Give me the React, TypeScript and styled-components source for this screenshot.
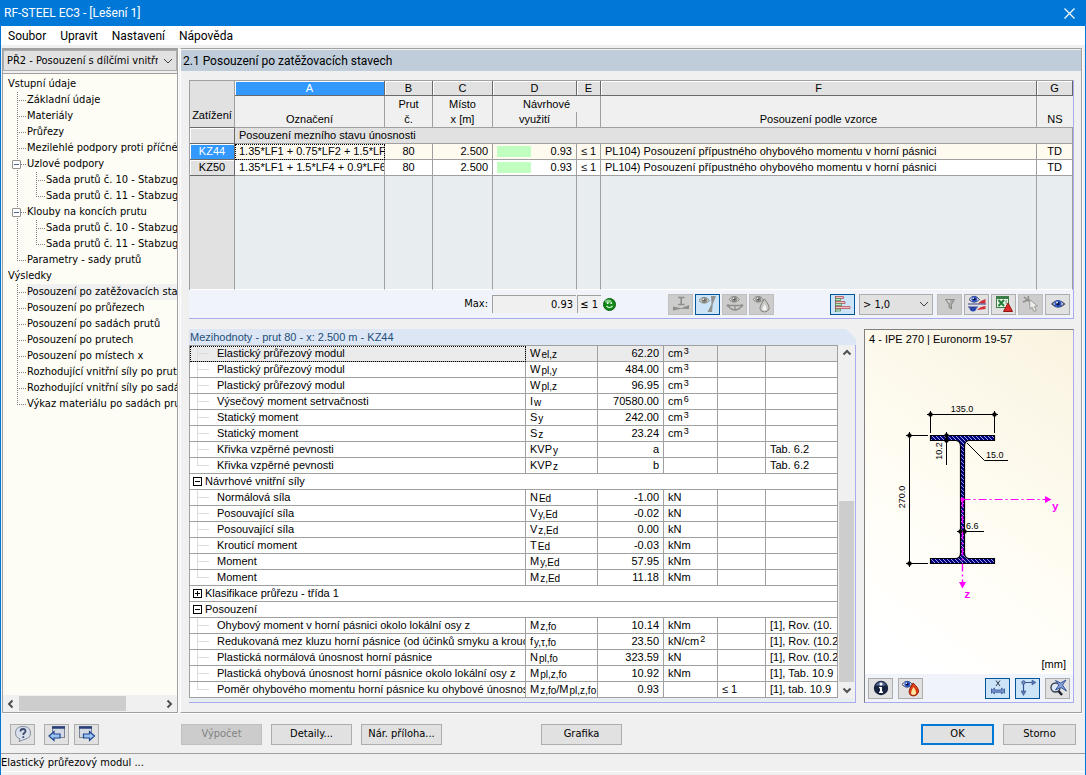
import React from 'react';
import styled, { createGlobalStyle, css } from 'styled-components';

const ui = '"DejaVu Sans Condensed", "DejaVu Sans", sans-serif';
const chrome = 'Roboto, "Open Sans", sans-serif';
const gridFont = '"Liberation Sans", Arial, sans-serif';
const line = '#a0a0a0';

const Global = createGlobalStyle`
  *, *::before, *::after { box-sizing: border-box; }
  html, body { margin: 0; padding: 0; background: #f0f0f0; }
  body { font: 11px/16px ${ui}; color: #000; }
  button, input, select { font: inherit; color: inherit; margin: 0; padding: 0; border-radius: 0; }
  ul, h1, h2, h3, p { margin: 0; padding: 0; font: inherit; list-style: none; }
  svg { display: block; flex: none; }
`;

const Frame = styled.div`
  display: flex;
  flex-direction: column;
  min-height: 100vh;
  border: 1px solid #0078d7;
  border-top: 0;
  background: #f0f0f0;
`;

const TitleBar = styled.header`
  display: flex;
  align-items: center;
  justify-content: space-between;
  height: 26px;
  padding: 0 10px 0 3px;
  background: #0078d7;
  color: #fff;
  font: 12px/16px ${chrome};
`;

const CloseButton = styled.button`
  display: flex;
  border: 0;
  background: none;
  color: #fff;
`;

const MenuBar = styled.nav`
  display: flex;
  gap: 14px;
  height: 19px;
  margin-bottom: 3px;
  padding: 0 7px;
  background: #fff;
  font: 12px/20px ${chrome};
  a { color: #000; text-decoration: none; }
`;

const Work = styled.div`
  display: flex;
  flex: 1;
  gap: 2px;
  padding: 0 3px 0 1px;
`;

const SidePane = styled.aside`
  display: flex;
  flex-direction: column;
  flex: none;
  width: 176px;
  border: 1px solid ${line};
  border-top-width: 2px;
  background: #fdfdf5;
  box-shadow: 1px 1px #fff;
`;

const SelectBox = styled.div<{ $width?: string }>`
  display: grid;
  align-items: center;
  width: ${p => p.$width || '100%'};
  > * { grid-area: 1 / 1; }
  svg { justify-self: end; margin-right: 4px; pointer-events: none; }
`;

const Select = styled.select`
  appearance: none;
  width: 100%;
  height: 21px;
  padding: 1px 18px 0 3px;
  border: 1px solid #adadad;
  background: #e1e1e1;
  outline: 0;
`;

const CaseRow = styled.div`
  padding-bottom: 2px;
  border-bottom: 1px solid ${line};
  background: #f0f0f0;
`;

const Tree = styled.ul`
  flex: 1;
  overflow: hidden;
  padding-top: 2px;
`;

const TreeRow = styled.li`
  display: flex;
  height: 16px;
  padding-left: 5px;
  white-space: nowrap;
`;

type GuideKind = 'tee' | 'end' | 'pass' | 'blank';
const dotV = 'repeating-linear-gradient(#808080 0 1px, transparent 1px 2px)';
const dotH = 'repeating-linear-gradient(90deg, #808080 0 1px, transparent 1px 2px)';

const Guide = styled.span<{ $kind: GuideKind }>`
  display: flex;
  flex: none;
  align-items: center;
  width: 19px;
  padding-left: 4px;
  background-repeat: no-repeat;
  ${p => p.$kind === 'tee' && css`
    background-image: ${dotV}, ${dotH};
    background-size: 1px 16px, 9px 1px;
    background-position: 9px 0, 9px 8px;
  `}
  ${p => p.$kind === 'end' && css`
    background-image: ${dotV}, ${dotH};
    background-size: 1px 8px, 9px 1px;
    background-position: 9px 0, 9px 8px;
  `}
  ${p => p.$kind === 'pass' && css`
    background-image: ${dotV};
    background-size: 1px 16px;
    background-position: 9px 0;
  `}
`;

const TreeToggle = styled.button`
  display: flex;
  align-items: center;
  justify-content: center;
  width: 9px;
  height: 9px;
  border: 1px solid #919191;
  border-radius: 1px;
  background: #fff;
  &::before { content: ''; width: 5px; height: 1px; background: #4b63a7; }
`;

const TreeLabel = styled.span<{ $selected?: boolean }>`
  flex: 1;
  background: ${p => (p.$selected ? '#f0f0f0' : 'none')};
`;

const ScrollTrack = styled.div<{ $vertical?: boolean }>`
  display: flex;
  flex: none;
  flex-direction: ${p => (p.$vertical ? 'column' : 'row')};
  ${p => (p.$vertical ? 'width: 17px;' : 'height: 17px;')}
  ${p => (p.$vertical ? 'padding: 0 1px;' : 'padding: 1px 0;')}
  background: #f0f0f0;
`;

const ScrollArrow = styled.button`
  display: flex;
  align-items: center;
  justify-content: center;
  flex: none;
  width: 16px;
  height: 16px;
  border: 0;
  background: none;
  color: #505050;
`;

const ScrollSpace = styled.div<{ $share: number }>`flex: ${p => p.$share};`;
const ScrollThumb = styled(ScrollSpace)`background: #cdcdcd;`;

const MainPane = styled.main`
  flex: 1;
  min-width: 0;
  border: 1px solid ${line};
  border-left-color: #fff;
  padding: 1px 0 9px;
  box-shadow: 1px 1px #fff;
`;

const PaneHeading = styled.h1`
  height: 21px;
  padding-left: 2px;
  background: #bfcddb;
  line-height: 22px;
  font-family: ${chrome};
  font-size: 12px;
`;

const Sections = styled.div`
  display: flex;
  flex-direction: column;
  gap: 10px;
  padding: 9px 7px 0 8px;
`;

const ResultBox = styled.section`
  border-right: 1px solid #aaaaee;
  border-bottom: 1px solid #aaaaee;
  background: #f0f4fa;
`;

const Table = styled.table`
  width: 100%;
  table-layout: fixed;
  border-collapse: separate;
  border-spacing: 0;
  border: solid ${line};
  border-width: 1px 0 0 1px;
  font: 11px/15px ${gridFont};
`;

const Cell = styled.td<{ $align?: string; $tone?: string }>`
  height: 16px;
  padding: 0 ${p => (p.$align === 'right' ? 4 : 0)}px 0 ${p => (p.$align === 'center' ? 0 : 4)}px;
  border: solid ${line};
  border-width: 0 1px 1px 0;
  background: ${p => p.$tone || '#fff'};
  text-align: ${p => p.$align || 'left'};
  white-space: nowrap;
  overflow: hidden;
`;

const LetterCell = styled.th<{ $active?: boolean }>`
  height: 15px;
  padding: 0;
  border: solid #696969;
  border-width: 0 1px 1px 0;
  background: ${p => (p.$active ? '#3399ff' : '#e1e1e1')};
  color: ${p => (p.$active ? '#fff' : '#000')};
  box-shadow: inset 1px 1px #fff;
  font-weight: normal;
  line-height: 14px;
`;

const HeadCell = styled.th<{ $lower?: boolean; $open?: boolean }>`
  height: 16px;
  padding: 0;
  border: solid ${line};
  border-width: 0 ${p => (p.$open ? 0 : 1)}px ${p => (p.$lower ? 1 : 0)}px 0;
  background: #f0f0f0;
  font-weight: normal;
  white-space: nowrap;
`;

const CornerCell = styled(HeadCell)`
  padding-bottom: 4px;
  border-bottom: 1px solid #696969;
  background: #e1e1e1;
  vertical-align: bottom;
`;

const RowHead = styled.th<{ $active?: boolean }>`
  height: 16px;
  padding: 0;
  border: solid #696969;
  border-width: 0 1px 1px 0;
  background: ${p => (p.$active ? '#3399ff' : '#e1e1e1')};
  color: ${p => (p.$active ? '#fff' : '#000')};
  box-shadow: inset 1px 1px #fff;
  font-weight: normal;
`;

const FillCell = styled(Cell)`
  height: 114px;
  border-bottom-color: #fff;
`;

const focusRing = css`
  outline: 1px dotted #000;
  outline-offset: -1px;
`;

const FocusCell = styled(Cell)`${focusRing}`;

const Usage = styled.div`
  display: flex;
  align-items: center;
  justify-content: space-between;
`;

const UsageBar = styled.span`
  width: 34px;
  height: 11px;
  background: #c0ffc0;
`;

const Toolbar = styled.div`
  display: flex;
  align-items: center;
  height: 28px;
  padding-right: 3px;
`;

const MaxLabel = styled.label`
  width: 303px;
  padding-right: 4px;
  text-align: right;
`;

const ReadField = styled.input<{ $width: number }>`
  width: ${p => p.$width}px;
  height: 18px;
  padding-right: 3px;
  border: solid ${line};
  border-width: 1px 0 0 1px;
  background: #f0f0f0;
  text-align: right;
  outline: 0;
  & + & { margin-left: 1px; }
`;

const Smile = styled.span`margin-left: 2px;`;

const ButtonGroup = styled.div<{ $left?: string; $gap?: number }>`
  display: flex;
  gap: ${p => p.$gap || 2}px;
  margin-left: ${p => p.$left || '0'};
`;

const IconButton = styled.button<{ $on?: boolean }>`
  display: flex;
  align-items: center;
  justify-content: center;
  width: 25px;
  height: 21px;
  border: 1px solid ${p => (p.$on ? '#005499' : '#adadad')};
  background: ${p => (p.$on ? '#cce4f7' : '#e1e1e1')};
  &:disabled { border-color: #bfbfbf; background: #cccccc; }
`;

const LowerRow = styled.div`
  display: flex;
  gap: 8px;
`;

const DetailBox = styled.section`
  flex: 1;
  min-width: 0;
  border-bottom: 1px solid #aaaaee;
  background: #e8eef0;
`;

const DetailTitleRow = styled.div`background: #f0f0f0;`;

const DetailTitle = styled.h2`
  height: 16px;
  padding-left: 1px;
  background: #dce6f4;
  color: #1f4e79;
  font: 11px/16px ${gridFont};
  clip-path: polygon(0 0, calc(100% - 10px) 0, 100% 10px, 100% 100%, 0 100%);
`;

const DetailBody = styled.div`
  display: flex;
  padding-bottom: 4px;
  border-right: 1px solid #aaaaee;
`;

const TreeCell = styled(Cell)<{ $focus?: boolean }>`
  padding: 0;
  ${p => p.$focus && focusRing}
`;

const Branch = styled.div<{ $last?: boolean }>`
  height: 15px;
  padding-left: 27px;
  overflow: hidden;
  background-image: linear-gradient(#dcdcdc, #dcdcdc), linear-gradient(#dcdcdc, #dcdcdc);
  background-size: 1px ${p => (p.$last ? 8 : 15)}px, 12px 1px;
  background-position: 7px 0, 7px 7px;
  background-repeat: no-repeat;
`;

const GroupLine = styled.div`
  display: flex;
  align-items: center;
  gap: 3px;
  height: 15px;
  padding-left: 3px;
`;

const GroupToggle = styled.button<{ $closed?: boolean }>`
  width: 9px;
  height: 9px;
  border: 1px solid #000;
  background: linear-gradient(#000, #000) 1px 3px / 5px 1px no-repeat,
    linear-gradient(#000, #000) 3px 1px / 1px ${p => (p.$closed ? 5 : 0)}px no-repeat, #fff;
`;

const Sub = styled.sub`
  padding-left: 1px;
  font-size: 10px;
  line-height: 1px;
  vertical-align: -1px;
`;

const Sup = styled.sup`
  padding-left: 1px;
  font-size: 9px;
  line-height: 1px;
  vertical-align: 3px;
`;

const SectionPanel = styled.section`
  display: flex;
  flex-direction: column;
  flex: none;
  width: 210px;
  border: solid;
  border-width: 1px;
  border-color: #808080 #aaaaee #aaaaee #808080;
  background: #f0f4fa;
`;

const DrawingArea = styled.div`
  display: flex;
  flex: 1;
  flex-direction: column;
  justify-content: space-between;
  background: linear-gradient(35deg, #ffffff 10%, #fffdf4 45%, #f9f3e0 100%);
`;

const DrawingTitle = styled.h3`
  padding-left: 4px;
  font: 11px/18px ${gridFont};
`;

const Unit = styled.p`
  padding-right: 7px;
  text-align: right;
  font-family: ${gridFont};
  line-height: 20px;
`;

const PanelTools = styled(Toolbar)`
  justify-content: space-between;
  padding: 0 3px;
`;

const Footer = styled.footer`
  display: flex;
  align-items: center;
  height: 38px;
  margin-top: 2px;
  padding: 0 9px;
`;

const CommandButton = styled.button<{ $narrow?: boolean; $default?: boolean }>`
  width: ${p => (p.$narrow ? 73 : 81)}px;
  height: 21px;
  border: ${p => (p.$default ? '2px solid #0078d7' : '1px solid #adadad')};
  background: #e1e1e1;
  line-height: 16px;
  &:disabled { border-color: #bfbfbf; background: #cccccc; color: #838383; }
`;

const StatusBar = styled.div`
  height: 19px;
  margin-bottom: 3px;
  border-top: 1px solid ${line};
  border-bottom: 1px solid #fff;
  line-height: 18px;
`;

/* ---------- icons ---------- */

const Chevron = ({ dir }: { dir: 'up' | 'down' | 'left' | 'right' }) => {
  const d = { up: 'M1.500 6.500 5 3 8.500 6.500', down: 'M1.500 3.500 5 7 8.500 3.500', left: 'M6.500 1.500 3 5 6.500 8.500', right: 'M3.500 1.500 7 5 3.500 8.500' }[dir];
  return <svg width="10" height="10"><path d={d} fill="none" stroke="#505050" strokeWidth="2" /></svg>;
};

const SelectChevron = () => (
  <svg width="10" height="8"><path d="M1 2 5 6 9 2" fill="none" stroke="#404040" strokeWidth="1" /></svg>
);

const CloseIcon = () => (
  <svg width="11" height="11"><path d="M.5.5 10.500 10.500M10.500.5.5 10.500" stroke="#fff" strokeWidth="1.200" /></svg>
);

const EyeShape = ({ x = 0, y = 0, grey = false }: { x?: number; y?: number; grey?: boolean }) => (
  <g transform={`translate(${x} ${y})`}>
    <path d="M0 4.500Q5-2 10.500 4.500 5 10 0 4.500Z" fill={grey ? '#d8d8d4' : '#e4e8f4'} stroke={grey ? '#8a8a84' : '#3b4668'} />
    <circle cx="5.300" cy="4.200" r="2.900" fill={grey ? '#8e8e88' : '#2f55c8'} />
    <circle cx="5.300" cy="4.200" r="1.300" fill={grey ? '#666' : '#081038'} />
    <circle cx="4.300" cy="3.200" r=".8" fill="#fff" />
  </g>
);

const BeamIcon = () => (
  <svg width="18" height="18">
    <path d="M6 2.500H12.500M6 9.500H12.500M9.200 2.500V9.500" stroke="#8e8e8a" strokeWidth="1.600" />
    <path d="M1 15.500V11.500L9 13.300 17 10V14L9 13.800Z" fill="#8c8c88" />
  </svg>
);

const EyeBeamIcon = () => (
  <svg width="18" height="18">
    <EyeShape grey x={0} y={1} />
    <path d="M12 1H17L13.800 9 13 17H8.500L12.500 9Z" fill="#92928e" />
  </svg>
);

const EyeCurveIcon = () => (
  <svg width="18" height="18">
    <EyeShape grey x={3} y={0} />
    <path d="M1 10.500H17M2 11Q9 19 16 11M9 10.500V15" fill="none" stroke="#8e8e8a" strokeWidth="1.300" />
    <circle cx="2" cy="10.500" r="1.300" fill="#8e8e8a" /><circle cx="16" cy="10.500" r="1.300" fill="#8e8e8a" />
  </svg>
);

const EyeDropIcon = () => (
  <svg width="18" height="18">
    <EyeShape grey x={0} y={0} />
    <path d="M11.500 4Q17 11 16 14 14.500 17 11.500 17 8 17 7 14 6.500 11 11.500 4Z" fill="#c8c8c4" stroke="#85857f" />
    <path d="M11.500 9Q14 13 13.500 14.500 11.500 16.500 9.500 14.500 9.300 13 11.500 9Z" fill="#f4f4f4" />
  </svg>
);

const BarsIcon = () => (
  <svg width="18" height="18">
    <path d="M1.500 1V17" stroke="#48544c" />
    <g strokeWidth=".8">
      <path d="M1.500 1.500H9.500V3.500H1.500Z" fill="#f6c0c0" stroke="#b05058" />
      <path d="M1.500 3.500H6.500V5.500H1.500Z" fill="#c0ecc0" stroke="#4e8a58" />
      <path d="M1.500 6.500H11V8.500H1.500Z" fill="#f6c0c0" stroke="#b05058" />
      <path d="M1.500 8.500H7.500V10.500H1.500Z" fill="#c0ecc0" stroke="#4e8a58" />
      <path d="M1.500 11.500H16V13.500H1.500Z" fill="#f6c0c0" stroke="#b05058" />
      <path d="M1.500 14H6.500V16H1.500Z" fill="#c0ecc0" stroke="#4e8a58" />
    </g>
  </svg>
);

const FilterIcon = () => (
  <svg width="18" height="18">
    <path d="M4.500 4.500H13.500L10.500 9.500V14L8 12.500V9.500Z" fill="#aaaaa6" stroke="#8c8c86" />
    <path d="M6 5.500H9L8.500 8Z" fill="#e6e6e4" />
  </svg>
);

const EyeDiagramIcon = () => (
  <svg width="18" height="18">
    <path d="M10 8.500Q13 5 17.500 4V8.500Z" fill="#d03038" />
    <path d="M0 9H18" stroke="#35408c" />
    <EyeShape x={1} y={0} />
    <path d="M1 12H9Q8 16.500 5 16.500 2 16.500 1 12Z" fill="#2846b0" />
    <path d="M9 15Q12 11.500 17.500 11V14Z" fill="#d03038" />
    <path d="M0 12H10" stroke="#35408c" />
  </svg>
);

const SheetIcon = () => (
  <svg width="18" height="18">
    <rect x="1.500" y="1.500" width="12" height="11" fill="#e9f5e9" stroke="#3c7c46" />
    <path d="M1.500 3H13.500" stroke="#3c7c46" strokeWidth="2" />
    <path d="M3.500 5 9 11M9 5 3.500 11" stroke="#23803a" strokeWidth="2" />
    <path d="M10.500 6H12M10.500 8H12" stroke="#3c7c46" />
    <path d="M13 8 17.500 16.500H8.500Z" fill="#e02828" stroke="#8c1818" />
  </svg>
);

const PickIcon = () => (
  <svg width="18" height="18">
    <path d="M2 2 8 7M1 7 7 4.500M6.500 1 6 6" stroke="#8e8e88" strokeWidth="1.500" />
    <path d="M7.500 4.500 8 14 10.200 12.300 12 16.500 14.300 15.500 12.500 11.500 15.500 11Z" fill="#ececea" stroke="#999993" />
  </svg>
);

const EyeIcon = () => (
  <svg width="18" height="18">
    <path d="M3 9Q9 2 15.500 9 9 15 3 9Z" fill="#e4e8f4" stroke="#3b4668" strokeWidth="1.200" />
    <circle cx="9" cy="8.700" r="3.500" fill="#2f55c8" />
    <circle cx="9" cy="8.700" r="1.700" fill="#081038" />
    <circle cx="8" cy="7.500" r=".9" fill="#fff" />
  </svg>
);

const SmileIcon = () => (
  <svg width="13" height="13" role="img" aria-label="OK">
    <circle cx="6.500" cy="6.500" r="6" fill="#128a18" stroke="#0b5c10" />
    <ellipse cx="5.200" cy="3.300" rx="3.200" ry="1.700" fill="#7fd080" />
    <circle cx="4.700" cy="5.200" r=".9" fill="#fff" /><circle cx="8.300" cy="5.200" r=".9" fill="#fff" />
    <path d="M3.500 7.800Q6.500 11.300 9.500 7.800" fill="none" stroke="#e8ffe8" strokeWidth="1.100" />
  </svg>
);

const InfoIcon = () => (
  <svg width="18" height="18">
    <circle cx="9" cy="9" r="7.200" fill="#18233f" />
    <path d="M3.500 6Q9-1 14.500 6 9 8 3.500 6Z" fill="#55668e" />
    <circle cx="9" cy="5" r="1.500" fill="#fff" />
    <path d="M7 8H10V12.500H11V14H7V12.500H8V9.300H7Z" fill="#fff" />
  </svg>
);

const FlameIcon = () => (
  <svg width="18" height="18">
    <EyeShape x={0} y={1} />
    <path d="M11 4Q17 9 16.500 13 15 17 11.500 17 7.500 17 7 13 7 10 11 4Z" fill="#e03c14" stroke="#94240c" />
    <path d="M11.500 8Q14.800 12.500 13.800 15 11.500 17 9.200 15 8.700 12.500 11.500 8Z" fill="#ffe9a0" />
  </svg>
);

const DimensionIcon = () => (
  <svg width="18" height="18">
    <path d="M7 1.500 11 7M11 1.500 7 7" stroke="#222b38" strokeWidth=".9" />
    <path d="M2 12 5.500 9V11H12.500V9L16 12 12.500 15V13.300H5.500V15Z" fill="#7795cd" stroke="#3a589c" strokeWidth=".8" />
    <path d="M2.500 9.500V14.500M15.500 9.500V14.500" stroke="#42649e" />
  </svg>
);

const AxesIcon = () => (
  <svg width="18" height="18">
    <path d="M4.500 3.500H14M4.500 3.500V13" stroke="#36558e" strokeWidth="1.200" />
    <path d="M13 1 17 3.500 13 6ZM2 12 4.500 16.500 7 12Z" fill="#5877b6" stroke="#36558e" strokeWidth=".6" />
    <circle cx="4.500" cy="3.500" r="1.700" fill="#7e99cf" stroke="#36558e" />
  </svg>
);

const ZoomResetIcon = () => (
  <svg width="18" height="18">
    <circle cx="6.500" cy="8.500" r="4.500" fill="#dce8f4" stroke="#3a4250" strokeWidth="1.400" />
    <path d="M9.500 12 13 16" stroke="#20242c" strokeWidth="2.500" />
    <path d="M6.500 1.500 11.500 4 17 1 13.500 6 17.500 12 12 8.500 6.500 11 10 6Z" fill="#8aa4da" stroke="#38569c" />
  </svg>
);

const HelpIcon = () => (
  <svg width="18" height="18">
    <path d="M9 1.500Q16.500 1.500 16.500 8 16.500 13 11.500 14L5 16.500 6 13.800Q1.500 12.500 1.500 8 1.500 1.500 9 1.500Z" fill="#d9e0ec" stroke="#8590a2" />
    <path d="M6.500 6.500Q6.500 4 9 4 11.500 4 11.500 6.300 11.500 7.500 9.500 8.500V10M9.300 11.300V13" fill="none" stroke="#3c4c70" strokeWidth="1.800" />
  </svg>
);

const WindowArrowIcon = ({ next = false }: { next?: boolean }) => (
  <svg width="18" height="18">
    <rect x={next ? 1.5 : 4.5} y="1.500" width="12" height="11" fill="#d4dae4" stroke="#7c8494" />
    <path d={next ? 'M1 2.500H14' : 'M4 2.500H17'} stroke="#28407c" strokeWidth="2.500" />
    <path
      d={next ? 'M16.500 11 11.500 6.500V9H5.500V13H11.500V15.500Z' : 'M1 11 6 6.500V9H12V13H6V15.500Z'}
      fill="#9cc4f0" stroke="#1c4690" strokeWidth="1.200"
    />
  </svg>
);

/* ---------- cross-section drawing ---------- */

const SectionDrawing = () => {
  const dots: [number, number][] = [[930.5, 414.5], [994.5, 414.5], [909.5, 435.5], [909.5, 563.5], [946.5, 435.5], [946.5, 440.5], [960.5, 531.5], [964.5, 531.5]];
  return (
    <svg width="208" height="306" viewBox="865 348 208 306" fontFamily="Liberation Sans, Arial, sans-serif" fontSize="9">
      <defs>
        <pattern id="hatch" width="4" height="4" patternUnits="userSpaceOnUse">
          <rect width="4" height="4" fill="#000080" />
          <path d="M0 0 4 4M-1 3 1 5M3-1 5 1" stroke="#b4b4e8" strokeWidth=".9" />
        </pattern>
      </defs>
      <path
        d="M930.500 435.500H994.500V440.500H969Q964.500 441 964.500 446V553Q964.500 558 969 558.500H994.500V563.500H930.500V558.500H956Q960.500 558 960.500 553V446Q960.500 441 956 440.500H930.500Z"
        fill="url(#hatch)" stroke="#000" strokeWidth="1.200"
      />
      <g stroke="#000" fill="none">
        <path d="M927 414.500H998M930.500 411V433M994.500 411V433" />
        <path d="M909.500 432V567M906 435.500H928M906 563.500H928" />
        <path d="M946.500 432V465M957 531.500H984M967 443 984.500 460.500H1008" />
      </g>
      {dots.map(([x, y]) => <circle key={`${x}-${y}`} cx={x} cy={y} r="2.200" />)}
      <text x="962" y="412" textAnchor="middle">135.0</text>
      <text x="986" y="458">15.0</text>
      <text x="966" y="529">6.6</text>
      <text transform="translate(905 497) rotate(-90)" textAnchor="middle">270.0</text>
      <text transform="translate(942 451) rotate(-90)" textAnchor="middle">10.2</text>
      <g stroke="#ff00ff" fill="none">
        <path d="M962.500 499.500H1045" strokeDasharray="8 3 2 3" />
        <path d="M962.500 499.500V582" strokeWidth="1.400" strokeDasharray="8 3 2 3" />
      </g>
      <g fill="#ff00ff">
        <circle cx="962.500" cy="499.500" r="2" />
        <path d="M1045 496 1051.500 499.500 1045 503ZM959 582H966L962.500 588.500Z" />
        <g fontFamily="'Liberation Mono', monospace" fontWeight="bold" fontSize="11">
          <text x="1052" y="510">y</text>
          <text x="964" y="598">z</text>
        </g>
      </g>
    </svg>
  );
};

/* ---------- data ---------- */

type TreeItem = { text: string; guides: GuideKind[]; open?: boolean; selected?: boolean };

const treeItems: TreeItem[] = [
  { text: 'Vstupní údaje', guides: [] },
  { text: 'Základní údaje', guides: ['tee'] },
  { text: 'Materiály', guides: ['tee'] },
  { text: 'Průřezy', guides: ['tee'] },
  { text: 'Mezilehlé podpory proti příčném', guides: ['tee'] },
  { text: 'Uzlové podpory', guides: ['tee'], open: true },
  { text: 'Sada prutů č. 10 - Stabzug', guides: ['pass', 'tee'] },
  { text: 'Sada prutů č. 11 - Stabzug', guides: ['pass', 'end'] },
  { text: 'Klouby na koncích prutu', guides: ['tee'], open: true },
  { text: 'Sada prutů č. 10 - Stabzug', guides: ['pass', 'tee'] },
  { text: 'Sada prutů č. 11 - Stabzug', guides: ['pass', 'end'] },
  { text: 'Parametry - sady prutů', guides: ['end'] },
  { text: 'Výsledky', guides: [] },
  { text: 'Posouzení po zatěžovacích stav', guides: ['tee'], selected: true },
  { text: 'Posouzení po průřezech', guides: ['tee'] },
  { text: 'Posouzení po sadách prutů', guides: ['tee'] },
  { text: 'Posouzení po prutech', guides: ['tee'] },
  { text: 'Posouzení po místech x', guides: ['tee'] },
  { text: 'Rozhodující vnitřní síly po prute', guides: ['tee'] },
  { text: 'Rozhodující vnitřní síly po sadác', guides: ['tee'] },
  { text: 'Výkaz materiálu po sadách prut', guides: ['end'] },
];

type Detail = {
  group?: string; closed?: boolean; last?: boolean;
  name?: string; sym?: React.ReactNode; value?: string; unit?: React.ReactNode; limit?: string; ref?: string;
};

const sym = (base: string, sub: string) => <>{base}<Sub>{sub}</Sub></>;
const pow = (base: string, exp: string) => <>{base}<Sup>{exp}</Sup></>;

const details: Detail[] = [
  { name: 'Elastický průřezový modul', sym: sym('W', 'el,z'), value: '62.20', unit: pow('cm', '3') },
  { name: 'Plastický průřezový modul', sym: sym('W', 'pl,y'), value: '484.00', unit: pow('cm', '3') },
  { name: 'Plastický průřezový modul', sym: sym('W', 'pl,z'), value: '96.95', unit: pow('cm', '3') },
  { name: 'Výsečový moment setrvačnosti', sym: sym('I', 'w'), value: '70580.00', unit: pow('cm', '6') },
  { name: 'Statický moment', sym: sym('S', 'y'), value: '242.00', unit: pow('cm', '3') },
  { name: 'Statický moment', sym: sym('S', 'z'), value: '23.24', unit: pow('cm', '3') },
  { name: 'Křivka vzpěrné pevnosti', sym: sym('KVP', 'y'), value: 'a', ref: 'Tab. 6.2' },
  { name: 'Křivka vzpěrné pevnosti', sym: sym('KVP', 'z'), value: 'b', ref: 'Tab. 6.2', last: true },
  { group: 'Návrhové vnitřní síly' },
  { name: 'Normálová síla', sym: sym('N', 'Ed'), value: '-1.00', unit: 'kN' },
  { name: 'Posouvající síla', sym: sym('V', 'y,Ed'), value: '-0.02', unit: 'kN' },
  { name: 'Posouvající síla', sym: sym('V', 'z,Ed'), value: '0.00', unit: 'kN' },
  { name: 'Krouticí moment', sym: sym('T', 'Ed'), value: '-0.03', unit: 'kNm' },
  { name: 'Moment', sym: sym('M', 'y,Ed'), value: '57.95', unit: 'kNm' },
  { name: 'Moment', sym: sym('M', 'z,Ed'), value: '11.18', unit: 'kNm', last: true },
  { group: 'Klasifikace průřezu - třída 1', closed: true },
  { group: 'Posouzení' },
  { name: 'Ohybový moment v horní pásnici okolo lokální osy z', sym: sym('M', 'z,fo'), value: '10.14', unit: 'kNm', ref: '[1], Rov. (10.' },
  { name: 'Redukovaná mez kluzu horní pásnice (od účinků smyku a krouc', sym: sym('f', 'y,τ,fo'), value: '23.50', unit: pow('kN/cm', '2'), ref: '[1], Rov. (10.2' },
  { name: 'Plastická normálová únosnost horní pásnice', sym: sym('N', 'pl,fo'), value: '323.59', unit: 'kN', ref: '[1], Rov. (10.2' },
  { name: 'Plastická ohybová únosnost horní pásnice okolo lokální osy z', sym: sym('M', 'pl,z,fo'), value: '10.92', unit: 'kNm', ref: '[1], Tab. 10.9' },
  { name: 'Poměr ohybového momentu horní pásnice ku ohybové únosnost', sym: <>{sym('M', 'z,fo')}/{sym('M', 'pl,z,fo')}</>, value: '0.93', limit: '≤ 1', ref: '[1], tab. 10.9', last: true },
];

const loads = [
  { id: 'KZ44', text: '1.35*LF1 + 0.75*LF2 + 1.5*LF', active: true },
  { id: 'KZ50', text: '1.35*LF1 + 1.5*LF4 + 0.9*LF6', active: false },
];

/* ---------- page parts ---------- */

const Navigator = () => (
  <SidePane>
    <CaseRow>
      <SelectBox>
        <Select aria-label="Případ posouzení"><option>PŘ2 - Posouzení s dílčími vnitřními</option></Select>
        <SelectChevron />
      </SelectBox>
    </CaseRow>
    <Tree role="tree">
      {treeItems.map((item, i) => (
        <TreeRow key={i} role="treeitem">
          {item.guides.map((kind, g) => (
            <Guide key={g} $kind={kind}>{item.open && <TreeToggle aria-label={`Sbalit ${item.text}`} />}</Guide>
          ))}
          <TreeLabel $selected={item.selected}>{item.text}</TreeLabel>
        </TreeRow>
      ))}
    </Tree>
    <ScrollTrack>
      <ScrollArrow aria-label="Vlevo"><Chevron dir="left" /></ScrollArrow>
      <ScrollThumb $share={105} />
      <ScrollSpace $share={35} />
      <ScrollArrow aria-label="Vpravo"><Chevron dir="right" /></ScrollArrow>
    </ScrollTrack>
  </SidePane>
);

const LoadTable = () => (
  <Table>
    <colgroup>
      <col style={{ width: 45 }} /><col style={{ width: 150 }} /><col style={{ width: 48 }} /><col style={{ width: 60 }} />
      <col style={{ width: 84 }} /><col style={{ width: 24 }} /><col /><col style={{ width: 36 }} />
    </colgroup>
    <thead>
      <tr>
        <CornerCell rowSpan={3}>Zatížení</CornerCell>
        {['A', 'B', 'C', 'D', 'E', 'F', 'G'].map(l => <LetterCell key={l} $active={l === 'A'}>{l}</LetterCell>)}
      </tr>
      <tr>
        <HeadCell />
        <HeadCell>Prut</HeadCell>
        <HeadCell>Místo</HeadCell>
        <HeadCell colSpan={2}>Návrhové</HeadCell>
        <HeadCell />
        <HeadCell $open />
      </tr>
      <tr>
        <HeadCell $lower>Označení</HeadCell>
        <HeadCell $lower>č.</HeadCell>
        <HeadCell $lower>x [m]</HeadCell>
        <HeadCell $lower>využití</HeadCell>
        <HeadCell $lower />
        <HeadCell $lower>Posouzení podle vzorce</HeadCell>
        <HeadCell $lower $open>NS</HeadCell>
      </tr>
    </thead>
    <tbody>
      <tr>
        <RowHead />
        <Cell colSpan={7} $tone="#e1e1e1">Posouzení mezního stavu únosnosti</Cell>
      </tr>
      {loads.map(l => {
        const tone = l.active ? '#fffaf0' : '#fff';
        const Name = l.active ? FocusCell : Cell;
        return (
          <tr key={l.id}>
            <RowHead $active={l.active}>{l.id}</RowHead>
            <Name $tone={tone}>{l.text}</Name>
            <Cell $tone={tone} $align="center">80</Cell>
            <Cell $tone={tone} $align="right">2.500</Cell>
            <Cell $tone={tone} $align="right"><Usage><UsageBar />0.93</Usage></Cell>
            <Cell $tone={tone}>≤ 1</Cell>
            <Cell $tone={tone}>PL104) Posouzení přípustného ohybového momentu v horní pásnici</Cell>
            <Cell $tone={tone} $align="center">TD</Cell>
          </tr>
        );
      })}
      <tr>
        <FillCell $tone="#e1e1e1" />
        {[1, 2, 3, 4, 5, 6, 7].map(n => <FillCell key={n} $tone="#e8eef0" />)}
      </tr>
    </tbody>
  </Table>
);

const DetailTable = () => (
  <Table>
    <colgroup>
      <col /><col style={{ width: 72 }} /><col style={{ width: 66 }} /><col style={{ width: 54 }} />
      <col style={{ width: 48 }} /><col style={{ width: 72 }} />
    </colgroup>
    <tbody>
      {details.map((d, i) => {
        if (d.group) {
          return (
            <tr key={i}>
              <TreeCell colSpan={6}>
                <GroupLine><GroupToggle $closed={d.closed} aria-label={d.group} />{d.group}</GroupLine>
              </TreeCell>
            </tr>
          );
        }
        const tone = i === 0 ? '#ebebeb' : '#fff';
        return (
          <tr key={i}>
            <TreeCell $tone={tone} $focus={i === 0}><Branch $last={d.last}>{d.name}</Branch></TreeCell>
            <Cell $tone={tone}>{d.sym}</Cell>
            <Cell $tone={tone} $align="right">{d.value}</Cell>
            <Cell $tone={tone}>{d.unit}</Cell>
            <Cell $tone={tone}>{d.limit}</Cell>
            <Cell $tone={tone}>{d.ref}</Cell>
          </tr>
        );
      })}
    </tbody>
  </Table>
);

const App = () => (
  <>
    <Global />
    <Frame>
      <TitleBar>
        <span>RF-STEEL EC3 - [Lešení 1]</span>
        <CloseButton aria-label="Zavřít"><CloseIcon /></CloseButton>
      </TitleBar>
      <MenuBar>
        {['Soubor', 'Upravit', 'Nastavení', 'Nápověda'].map(m => <a key={m} href="#">{m}</a>)}
      </MenuBar>
      <Work>
        <Navigator />
        <MainPane>
          <PaneHeading>2.1 Posouzení po zatěžovacích stavech</PaneHeading>
          <Sections>
            <ResultBox>
              <LoadTable />
              <Toolbar>
                <MaxLabel htmlFor="max">Max:</MaxLabel>
                <ReadField id="max" $width={84} readOnly value="0.93" />
                <ReadField aria-label="Mez" $width={24} readOnly value="≤ 1" />
                <Smile><SmileIcon /></Smile>
                <ButtonGroup $left="52px">
                  <IconButton disabled aria-label="Průřez"><BeamIcon /></IconButton>
                  <IconButton $on aria-label="Prut"><EyeBeamIcon /></IconButton>
                  <IconButton disabled aria-label="Průběh"><EyeCurveIcon /></IconButton>
                  <IconButton disabled aria-label="Požár"><EyeDropIcon /></IconButton>
                </ButtonGroup>
                <ButtonGroup $left="auto" $gap={4}>
                  <IconButton $on aria-label="Sloupce"><BarsIcon /></IconButton>
                  <SelectBox $width="74px">
                    <Select aria-label="Filtr"><option>&gt; 1,0</option></Select>
                    <SelectChevron />
                  </SelectBox>
                </ButtonGroup>
                <ButtonGroup $left="4px">
                  <IconButton disabled aria-label="Filtrovat"><FilterIcon /></IconButton>
                  <IconButton aria-label="Diagramy"><EyeDiagramIcon /></IconButton>
                  <IconButton aria-label="Export"><SheetIcon /></IconButton>
                  <IconButton disabled aria-label="Vybrat"><PickIcon /></IconButton>
                  <IconButton aria-label="Zobrazit"><EyeIcon /></IconButton>
                </ButtonGroup>
              </Toolbar>
            </ResultBox>
            <LowerRow>
              <DetailBox>
                <DetailTitleRow>
                  <DetailTitle>Mezihodnoty - prut 80 - x: 2.500 m - KZ44</DetailTitle>
                </DetailTitleRow>
                <DetailBody>
                  <DetailTable />
                  <ScrollTrack $vertical>
                    <ScrollArrow aria-label="Nahoru"><Chevron dir="up" /></ScrollArrow>
                    <ScrollSpace $share={139} />
                    <ScrollThumb $share={180} />
                    <ScrollArrow aria-label="Dolů"><Chevron dir="down" /></ScrollArrow>
                  </ScrollTrack>
                </DetailBody>
              </DetailBox>
              <SectionPanel>
                <DrawingArea>
                  <DrawingTitle>4 - IPE 270 | Euronorm 19-57</DrawingTitle>
                  <SectionDrawing />
                  <Unit>[mm]</Unit>
                </DrawingArea>
                <PanelTools>
                  <ButtonGroup $gap={5}>
                    <IconButton aria-label="Informace"><InfoIcon /></IconButton>
                    <IconButton aria-label="Požární odolnost"><FlameIcon /></IconButton>
                  </ButtonGroup>
                  <ButtonGroup $gap={5}>
                    <IconButton $on aria-label="Kóty"><DimensionIcon /></IconButton>
                    <IconButton $on aria-label="Osy"><AxesIcon /></IconButton>
                    <IconButton aria-label="Celý pohled"><ZoomResetIcon /></IconButton>
                  </ButtonGroup>
                </PanelTools>
              </SectionPanel>
            </LowerRow>
          </Sections>
        </MainPane>
      </Work>
      <Footer>
        <IconButton aria-label="Nápověda"><HelpIcon /></IconButton>
        <ButtonGroup $left="9px" $gap={5}>
          <IconButton aria-label="Předchozí"><WindowArrowIcon /></IconButton>
          <IconButton aria-label="Další"><WindowArrowIcon next /></IconButton>
        </ButtonGroup>
        <ButtonGroup $left="82px" $gap={9}>
          <CommandButton disabled>Výpočet</CommandButton>
          <CommandButton>Detaily...</CommandButton>
          <CommandButton>Nár. příloha...</CommandButton>
        </ButtonGroup>
        <ButtonGroup $left="99px"><CommandButton>Grafika</CommandButton></ButtonGroup>
        <ButtonGroup $left="auto" $gap={9}>
          <CommandButton $narrow $default>OK</CommandButton>
          <CommandButton $narrow>Storno</CommandButton>
        </ButtonGroup>
      </Footer>
      <StatusBar role="status">Elastický průřezový modul ...</StatusBar>
    </Frame>
  </>
);

export default App;
